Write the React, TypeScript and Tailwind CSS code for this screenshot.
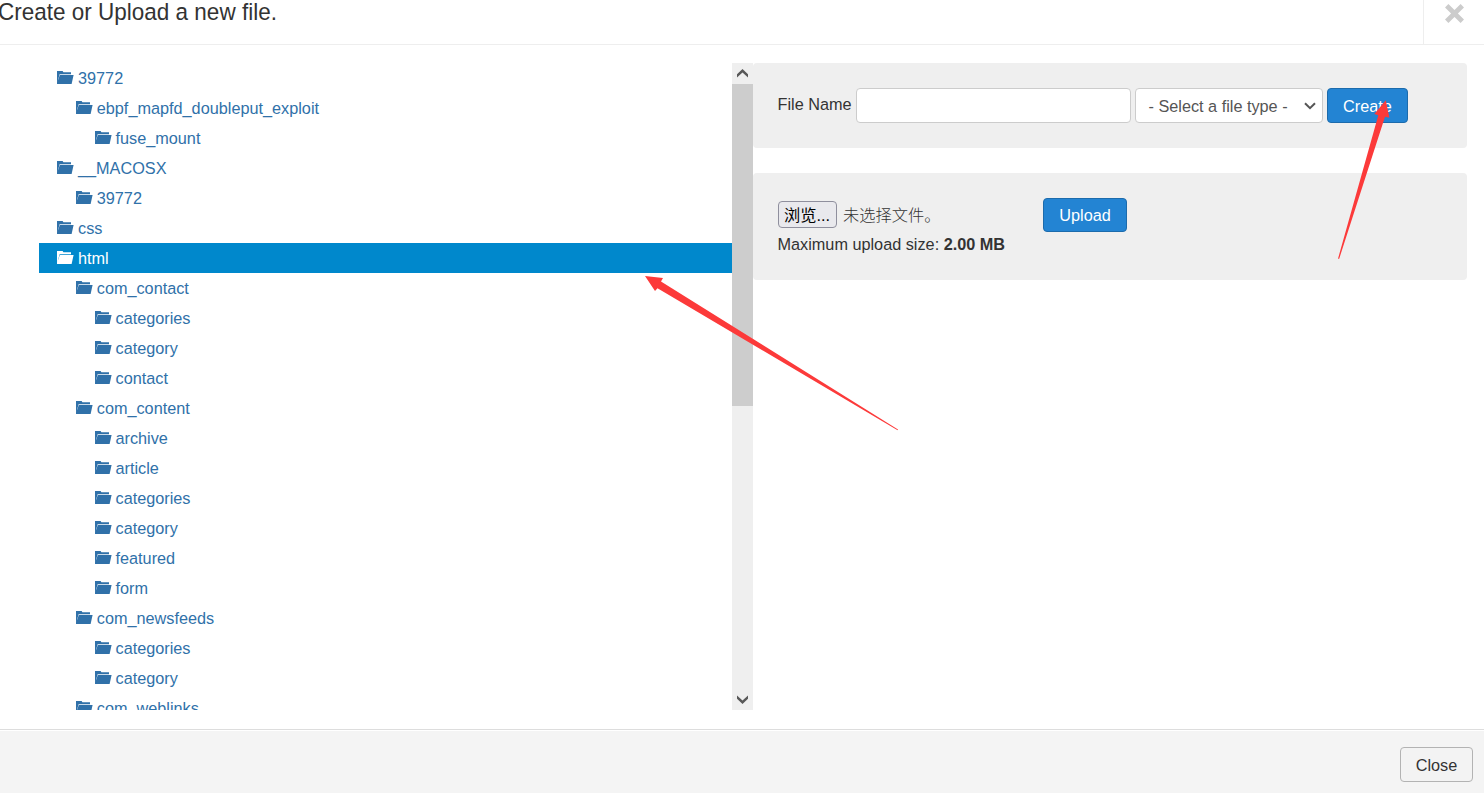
import React from "react";

type Folder = { name: string; depth: 0 | 1 | 2; active?: boolean };

const folders: Folder[] = [
  { name: "39772", depth: 0 },
  { name: "ebpf_mapfd_doubleput_exploit", depth: 1 },
  { name: "fuse_mount", depth: 2 },
  { name: "__MACOSX", depth: 0 },
  { name: "39772", depth: 1 },
  { name: "css", depth: 0 },
  { name: "html", depth: 0, active: true },
  { name: "com_contact", depth: 1 },
  { name: "categories", depth: 2 },
  { name: "category", depth: 2 },
  { name: "contact", depth: 2 },
  { name: "com_content", depth: 1 },
  { name: "archive", depth: 2 },
  { name: "article", depth: 2 },
  { name: "categories", depth: 2 },
  { name: "category", depth: 2 },
  { name: "featured", depth: 2 },
  { name: "form", depth: 2 },
  { name: "com_newsfeeds", depth: 1 },
  { name: "categories", depth: 2 },
  { name: "category", depth: 2 },
  { name: "com_weblinks", depth: 1 },
];

const indents = ["pl-[18px]", "pl-[36.75px]", "pl-[55.5px]"];

function FolderIcon() {
  return (
    <svg className="mr-1 mb-[1px] h-[13px] w-[17px] shrink-0" viewBox="0 0 17 13" fill="currentColor">
      <path d="M0 0H5.6L6.4 1.2H14V3.2H2.6L.9 9.5V13H0Z" />
      <path d="M2.8 3.9H16.6L14.6 13H.2V11.5Z" />
    </svg>
  );
}

function FolderRow({ name, depth, active }: Folder) {
  return (
    <li
      className={`flex h-[30px] shrink-0 items-center ${indents[depth]} ${
        active ? "bg-[#0088cc] text-white" : "text-[#3071a9]"
      }`}
    >
      <FolderIcon />
      <span>{name}</span>
    </li>
  );
}

function Scrollbar() {
  return (
    <div className="flex w-[21px] shrink-0 flex-col bg-[#efefef]">
      <div className="flex h-[21px] items-center justify-center">
        <svg className="h-[9px] w-[11px]" viewBox="0 0 11 9">
          <path d="M0 5.2 5.5 0 11 5.2V8.4L5.5 3.4 0 8.4Z" fill="#585858" />
        </svg>
      </div>
      <div className="h-[322px] bg-[#cdcdcd]" />
      <div className="flex-1" />
      <div className="flex h-[21px] items-center justify-center">
        <svg className="h-[9px] w-[11px]" viewBox="0 0 11 9">
          <path d="M0 .6 5.5 5.6 11 .6V3.8L5.5 9 0 3.8Z" fill="#585858" />
        </svg>
      </div>
    </div>
  );
}

const blueButton =
  "rounded-[4px] border border-[#1c6bac] bg-[#2384d3] text-white flex items-center justify-center";

export default function App() {
  return (
    <div className="relative flex h-[793px] w-[1484px] flex-col overflow-hidden bg-white font-['Liberation_Sans','Noto_Sans_CJK_SC',sans-serif] text-[16.25px] leading-[22.5px] text-[#333]">
      <header className="flex h-[45px] shrink-0 justify-between border-b border-[#eee]">
        <h3 className="-ml-[2px] h-[27px] origin-bottom -translate-y-[1px] scale-y-[1.06] text-[22.5px] leading-[27px] whitespace-nowrap">
          Create or Upload a new file.
        </h3>
        <button className="flex h-[45px] w-[61px] justify-center border-l border-[#eee] pl-[1px] pt-[4px]">
          <svg className="h-[19px] w-[19px]" viewBox="0 0 19 19">
            <path d="M3.4 0 9.5 6.1 15.6 0 19 3.4 12.9 9.5 19 15.6 15.6 19 9.5 12.9 3.4 19 0 15.6 6.1 9.5 0 3.4Z" fill="#ccc" />
          </svg>
        </button>
      </header>

      <main className="flex h-[684px] shrink-0 pt-[18px] pr-[17px] pb-[19px] pl-[39px]">
        <ul className="flex w-[693px] shrink-0 flex-col overflow-hidden">
          {folders.map((folder, i) => (
            <FolderRow key={i} {...folder} />
          ))}
        </ul>
        <Scrollbar />
        <div className="flex flex-1 flex-col gap-[25px]">
          <form className="flex h-[85px] items-start rounded-[4px] bg-[#efefef] pt-[25px] pl-[24.5px]">
            <label className="mt-[5px] w-[78.5px] whitespace-nowrap">File Name</label>
            <input
              type="text"
              className="h-[35px] w-[275px] rounded-[4px] border border-[#ccc] bg-white"
            />
            <div className="ml-1 flex h-[35px] w-[188px] items-center justify-between rounded-[4px] border border-[#ccc] bg-white pr-[6px] pl-[12.5px] text-[#555]">
              <span className="pt-[2px]">- Select a file type -</span>
              <svg className="h-[8px] w-[12px]" viewBox="0 0 12 8" fill="none" stroke="#555" strokeWidth="2">
                <path d="M1 1.2 6 6.2 11 1.2" />
              </svg>
            </div>
            <button type="button" className={`${blueButton} ml-1 h-[35px] w-[81px] pt-[2px]`}>
              Create
            </button>
          </form>

          <form className="flex h-[107px] items-start rounded-[4px] bg-[#efefef] pt-[25px] pl-[24.5px]">
            <div className="w-[265.5px]">
              <div className="flex items-center pt-[3px]">
                <button
                  type="button"
                  className="h-[27px] w-[59px] rounded-[4px] border border-[#8f8f9d] bg-[#e9e9ed] pt-[2px] whitespace-nowrap text-black"
                >
                  浏览...
                </button>
                <span className="ml-[6.5px] pt-[2px] font-light">未选择文件。</span>
              </div>
              <div className="mt-[5px]">
                Maximum upload size: <strong>2.00 MB</strong>
              </div>
            </div>
            <button type="button" className={`${blueButton} h-[34px] w-[84px]`}>
              Upload
            </button>
          </form>
        </div>
      </main>

      <footer className="flex flex-1 items-start justify-end border-t border-[#ddd] bg-[#f4f4f4] pt-[17px] pr-[11px] shadow-[inset_0_1px_0_#fff]">
        <button className="h-[35px] w-[73px] rounded-[4px] border border-[#b3b3b3] bg-[#f3f3f3] pt-[2px]">
          Close
        </button>
      </footer>

      <svg className="pointer-events-none absolute inset-0 h-[793px] w-[1484px]" viewBox="0 0 1484 793" fill="#fc3a3a">
        <path d="M645 276 663 278 661 281.4 898 429.6 897.6 430.2 657.5 288.2 655 291Z" />
        <path d="M1385.8 100.3 1374.3 114 1378.3 115.2 1338 258.7 1339.2 258.7 1385 116.8 1389.4 117.8Z" />
      </svg>
    </div>
  );
}
